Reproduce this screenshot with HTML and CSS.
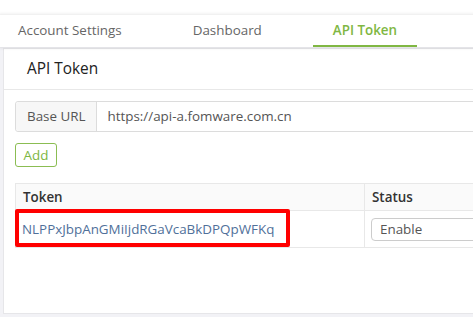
FILE: index.html
```html
<!DOCTYPE html>
<html>
<head>
<meta charset="utf-8">
<link rel="stylesheet" href="styles.css">
</head>
<body>
<div class="page">
  <nav class="tabs">
    <div class="tab">Account Settings</div>
    <div class="tab">Dashboard</div>
    <div class="tab active">API Token</div>
  </nav>
  <main class="main">
    <section class="panel">
      <header class="panel-head">API Token</header>
      <div class="panel-body">
        <div class="input-group">
          <span class="addon">Base URL</span>
          <span class="input">https://api-a.fomware.com.cn</span>
        </div>
        <button class="btn-add">Add</button>
        <div class="table-wrap">
          <table class="table">
            <thead>
              <tr><th class="c-token">Token</th><th class="c-status">Status</th></tr>
            </thead>
            <tbody>
              <tr>
                <td class="c-token token">NLPPxJbpAnGMiIjdRGaVcaBkDPQpWFKq</td>
                <td class="c-status"><div class="select">Enable</div></td>
              </tr>
            </tbody>
          </table>
          <div class="highlight"></div>
        </div>
      </div>
    </section>
  </main>
</div>
</body>
</html>
```

FILE: styles.css
```css
html, body {
  margin: 0;
  padding: 0;
  background: #fff;
  overflow: hidden;
}
body {
  width: 473px;
  height: 319px;
  font-family: "Open Sans", "Liberation Sans", sans-serif;
  font-size: 13.4px;
  color: #333;
}
.page {
  width: 600px;
  padding-top: 15px;
}
.tabs {
  display: flex;
  gap: 31px;
  height: 32px;
  margin-left: -2px;
  background: #fff;
  box-shadow: 0 0 4px rgba(0, 0, 0, 0.14);
  position: relative;
  z-index: 1;
}
.tab {
  padding: 0 20px;
  line-height: 30px;
  color: #666;
  border-bottom: 2px solid transparent;
  white-space: nowrap;
}
.tab.active {
  color: #80b743;
  font-weight: 600;
  border-bottom-color: #80b743;
}
.main {
  background: #f2f2f6;
  padding: 1px 0 3px 3px;
}
.panel {
  background: #fff;
  border: 1px solid #e6e6e9;
  height: 266px;
  box-sizing: border-box;
}
.panel-head {
  height: 40px;
  line-height: 40px;
  padding-left: 23px;
  font-size: 15.4px;
  font-weight: 500;
  color: #222;
  border-bottom: 1px solid #e8e8e8;
}
.panel-body {
  padding: 11px 0 0 11px;
}
.input-group {
  display: flex;
  height: 31px;
  box-sizing: border-box;
  border: 1px solid #dcdcdc;
  border-radius: 3px;
  width: 560px;
}
.addon {
  background: #f7f7f7;
  color: #555;
  padding: 0 10px 0 11px;
  line-height: 29px;
  border-right: 1px solid #dcdcdc;
  white-space: nowrap;
  border-radius: 3px 0 0 3px;
}
.input {
  padding-left: 11px;
  line-height: 29px;
  color: #555;
  white-space: nowrap;
}
.btn-add {
  display: block;
  margin-top: 11px;
  height: 24px;
  width: 42px;
  padding: 0;
  background: #fff;
  border: 1px solid #8bbd52;
  border-radius: 3px;
  color: #7db642;
  font-family: inherit;
  font-size: 13.4px;
}
.table-wrap {
  position: relative;
  margin-top: 16px;
}
.table {
  border-collapse: collapse;
  width: 560px;
}
.table th, .table td {
  border: 1px solid #e8e8e8;
  text-align: left;
  padding: 0 7px;
}
.table th {
  height: 26px;
  background: #fafafa;
  font-weight: 600;
  color: #333;
}
.table td {
  height: 36px;
  padding: 0 6px;
}
.c-token {
  width: 349px;
  box-sizing: border-box;
}
.token {
  color: #50709a;
  white-space: nowrap;
}
.select {
  height: 23px;
  box-sizing: border-box;
  border: 1px solid #ccc;
  border-radius: 4px;
  line-height: 21px;
  padding-left: 8px;
  color: #555;
}
.highlight {
  position: absolute;
  left: 0;
  top: 26px;
  width: 275px;
  height: 38px;
  box-sizing: border-box;
  border: 4px solid #ff0000;
  border-radius: 2px;
}
```
